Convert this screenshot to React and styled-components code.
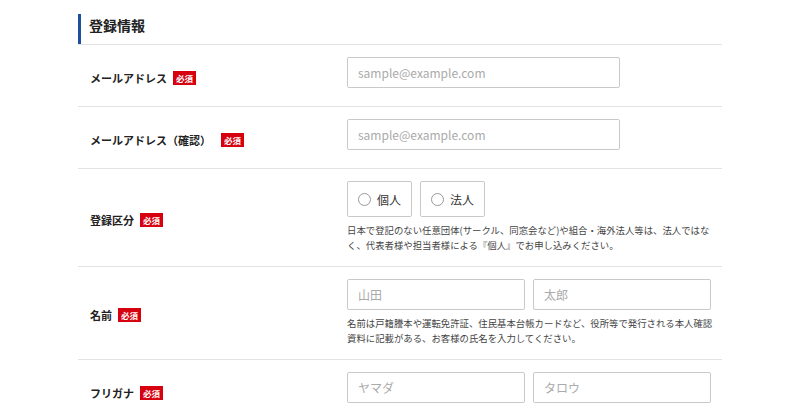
import React from "react";
import styled, { createGlobalStyle } from "styled-components";

const Global = createGlobalStyle`
  body { margin: 0; background: #fff; font-family: "Noto Sans CJK JP", "Noto Sans", sans-serif; color: #222; }
`;
const Wrap = styled.div` width: 644px; margin: 0 0 0 78px; padding-top: 14px; `;
const Heading = styled.h2`
  margin: 0; font-size: 14px; font-weight: 700; line-height: 22px;
  border-left: 3px solid #1d4f9c; padding-left: 8px; height: 22px;
  padding-bottom: 8px;
`;
const Row = styled.div`
  display: grid; grid-template-columns: 269px 1fr; align-items: center;
  border-top: 1px solid #e3e3e3; min-height: ${p => p.h}px; box-sizing: border-box;
  padding: 12px 0 8px;
  & > :last-child { align-self: start; }
`;
const Label = styled.div`
  padding-left: 12px; font-size: 11px; font-weight: 700; display: flex; align-items: center; gap: ${p => p.gap || 6}px;
`;
const Badge = styled.span`
  background: #d7000f; color: #fff; font-size: 8.5px; font-weight: 700; padding: 1px 3px; line-height: 12px;
`;
const Field = styled.div` display: flex; flex-direction: column; gap: 6px; `;
const Inputs = styled.div` display: flex; gap: 8px; `;
const Input = styled.input`
  width: ${p => p.w}px; height: 31px; box-sizing: border-box; border: 1px solid #c9c9c9; border-radius: 2px;
  padding: 0 10px; font-size: 12px; font-family: inherit; color: #222;
  &::placeholder { color: #aaa; }
`;
const Radio = styled.label`
  width: 65px; height: 36px; box-sizing: border-box; border: 1px solid #c9c9c9; border-radius: 2px;
  display: flex; align-items: center; justify-content: center; gap: 6px; font-size: 12px; color: #333;
`;
const Circle = styled.span` width: 11px; height: 11px; border: 1px solid #999; border-radius: 50%; `;
const Note = styled.p` margin: 0; font-size: 9.4px; line-height: 15px; color: #444; width: 372px; `;

export default function App() {
  return (
    <>
      <Global />
      <Wrap>
        <Heading>登録情報</Heading>
        <Row h={62}>
          <Label>メールアドレス<Badge>必須</Badge></Label>
          <Input w={273} placeholder="sample@example.com" />
        </Row>
        <Row h={62}>
          <Label gap={10}>メールアドレス（確認）<Badge>必須</Badge></Label>
          <Input w={273} placeholder="sample@example.com" />
        </Row>
        <Row h={98}>
          <Label>登録区分<Badge>必須</Badge></Label>
          <Field>
            <Inputs><Radio><Circle />個人</Radio><Radio><Circle />法人</Radio></Inputs>
            <Note>日本で登記のない任意団体(サークル、同窓会など)や組合・海外法人等は、法人ではなく、代表者様や担当者様による『個人』でお申し込みください。</Note>
          </Field>
        </Row>
        <Row h={93}>
          <Label>名前<Badge>必須</Badge></Label>
          <Field>
            <Inputs><Input w={178} placeholder="山田" /><Input w={178} placeholder="太郎" /></Inputs>
            <Note>名前は戸籍謄本や運転免許証、住民基本台帳カードなど、役所等で発行される本人確認資料に記載がある、お客様の氏名を入力してください。</Note>
          </Field>
        </Row>
        <Row h={62}>
          <Label>フリガナ<Badge>必須</Badge></Label>
          <Inputs><Input w={178} placeholder="ヤマダ" /><Input w={178} placeholder="タロウ" /></Inputs>
        </Row>
      </Wrap>
    </>
  );
}
